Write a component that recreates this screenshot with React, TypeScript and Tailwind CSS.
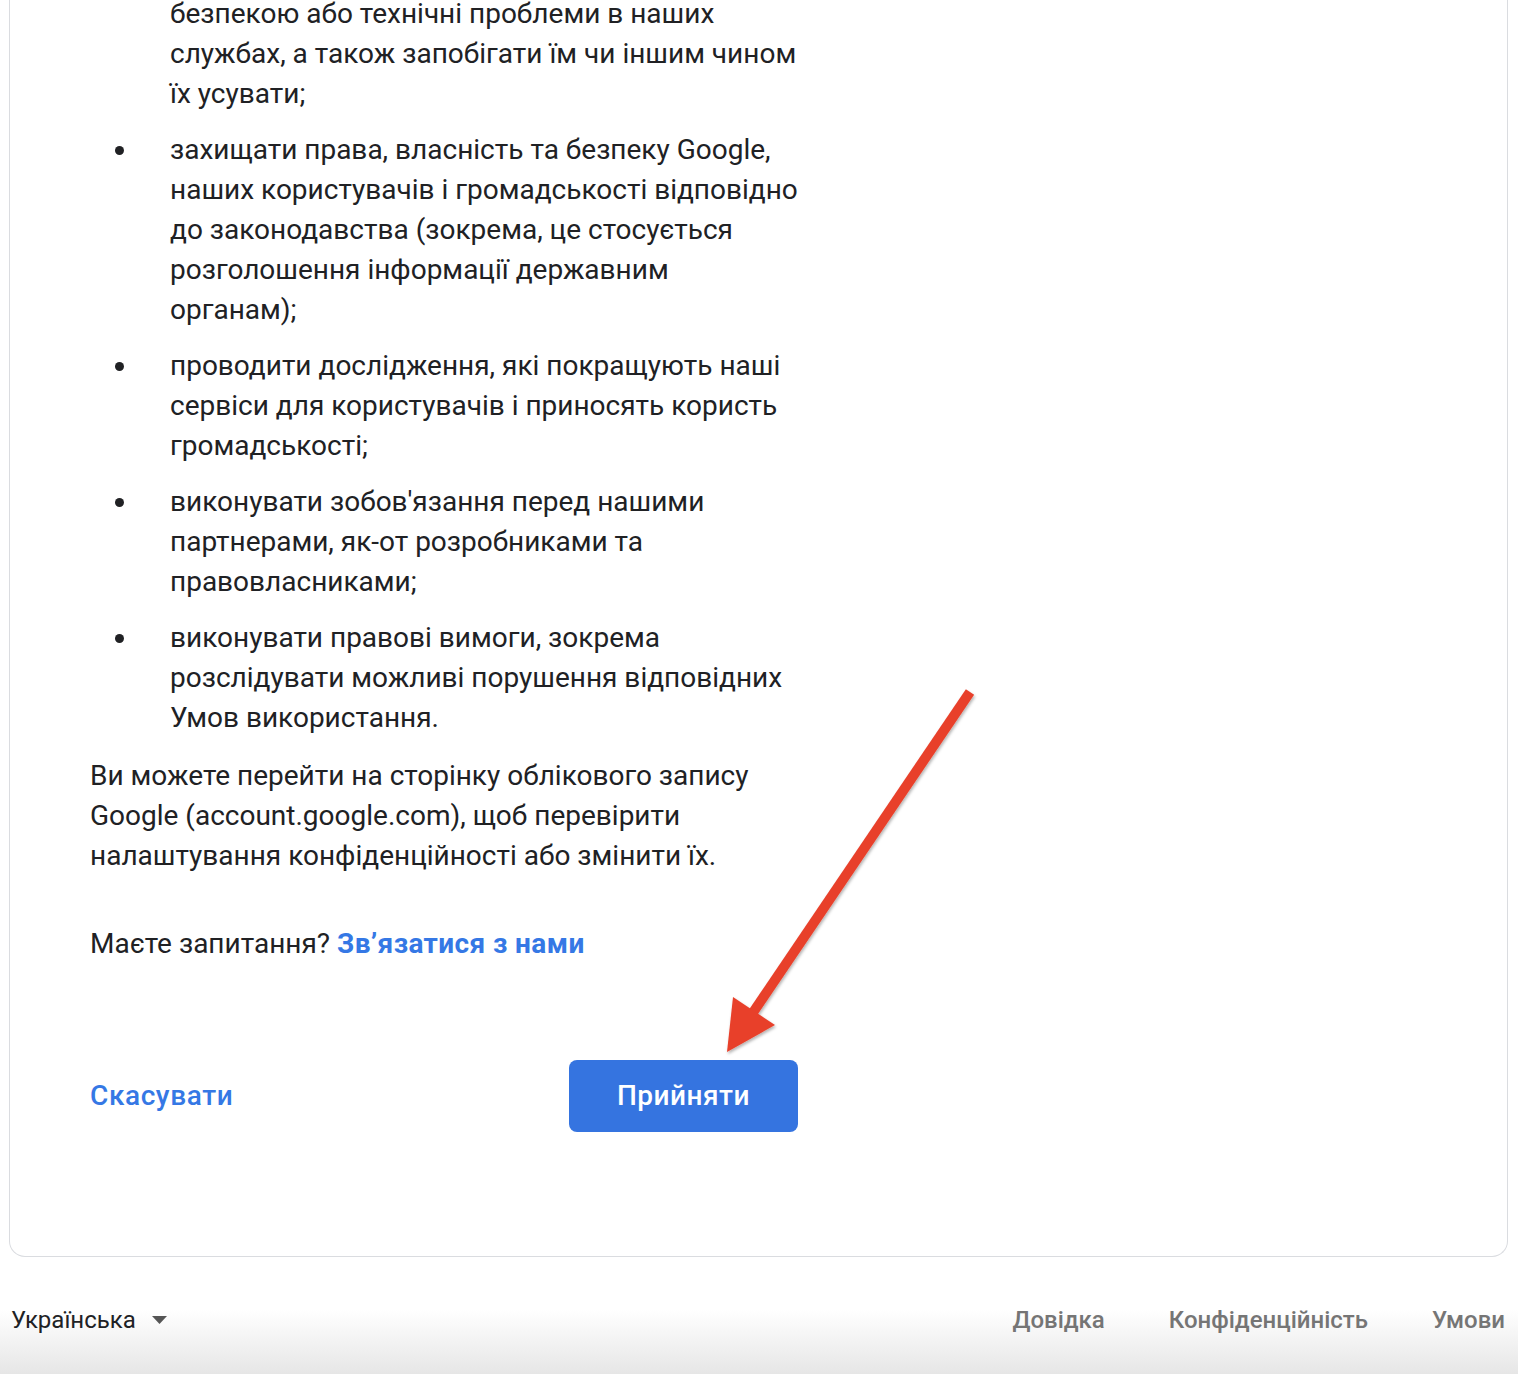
import React from "react";

const ITEMS: string[][] = [
  [
    "захищати права, власність та безпеку Google,",
    "наших користувачів і громадськості відповідно",
    "до законодавства (зокрема, це стосується",
    "розголошення інформації державним",
    "органам);",
  ],
  [
    "проводити дослідження, які покращують наші",
    "сервіси для користувачів і приносять користь",
    "громадськості;",
  ],
  [
    "виконувати зобов'язання перед нашими",
    "партнерами, як-от розробниками та",
    "правовласниками;",
  ],
  [
    "виконувати правові вимоги, зокрема",
    "розслідувати можливі порушення відповідних",
    "Умов використання.",
  ],
];

const Lines: React.FC<{ lines: string[] }> = ({ lines }) => (
  <div>
    {lines.map((l, i) => (
      <div key={i} className="whitespace-nowrap">
        {l}
      </div>
    ))}
  </div>
);

const App: React.FC = () => {
  return (
    <div
      className="relative w-[1518px] h-[1374px] overflow-hidden bg-white text-[#202124]"
      style={{ fontFamily: "Roboto, 'Noto Sans', sans-serif" }}
    >
      {/* Card (top scrolled out of view) */}
      <div className="flow-root ml-[9px] w-[1499px] h-[1257px] border border-t-0 border-[#dadce0] rounded-b-[16px] pl-[80px]">
        <div className="w-[708px] -mt-[6px] text-[28px] leading-[40px]">
          {/* tail of the previous bullet */}
          <div className="pl-[80px] mb-[16px]">
            <Lines
              lines={[
                "безпекою або технічні проблеми в наших",
                "службах, а також запобігати їм чи іншим чином",
                "їх усувати;",
              ]}
            />
          </div>

          <ul className="mb-[18px]">
            {ITEMS.map((item, i) => (
              <li key={i} className="flex mb-[16px] last:mb-0">
                <div className="w-[80px] shrink-0 pl-[25px] pt-[16px]">
                  <span className="block w-[9px] h-[9px] rounded-full bg-[#202124]" />
                </div>
                <Lines lines={item} />
              </li>
            ))}
          </ul>

          <Lines
            lines={[
              "Ви можете перейти на сторінку облікового запису",
              "Google (account.google.com), щоб перевірити",
              "налаштування конфіденційності або змінити їх.",
            ]}
          />

          <p className="mt-[48px] whitespace-nowrap">
            Маєте запитання?{" "}
            <a className="font-bold text-[#3578e5] tracking-[0.4px]">Зв’язатися з нами</a>
          </p>

          {/* Actions */}
          <div className="mt-[96px] flex items-center justify-between">
            <button className="text-[#3578e5] font-medium text-[28px] leading-[40px] tracking-[0.6px]">
              Скасувати
            </button>
            <button className="w-[229px] h-[72px] rounded-[8px] bg-[#3574e0] text-white font-medium text-[28px] tracking-[0.5px]">
              Прийняти
            </button>
          </div>
        </div>
      </div>

      {/* Footer */}
      <div className="h-[117px] bg-gradient-to-b from-white via-white via-[45%] to-[#e6e6e6] flex items-start justify-between pt-[46px] pl-[11px] pr-[13px] text-[24px] leading-[34px]">
        <div className="flex items-center gap-[16px]">
          <span className="text-[#202124]">Українська</span>
          <svg width="15" height="8" viewBox="0 0 15 8">
            <path d="M0 0 L15 0 L7.5 8 Z" fill="#555" />
          </svg>
        </div>
        <div className="flex items-center gap-[64px] font-medium text-[#757575]">
          <span>Довідка</span>
          <span>Конфіденційність</span>
          <span>Умови</span>
        </div>
      </div>

      {/* Annotation arrow */}
      <svg
        className="absolute left-0 top-0 pointer-events-none"
        width="1518"
        height="1374"
        viewBox="0 0 1518 1374"
      >
        <defs>
          <filter id="sh" x="-20%" y="-20%" width="140%" height="140%">
            <feDropShadow dx="1" dy="2" stdDeviation="1.5" floodColor="#000" floodOpacity="0.3" />
          </filter>
        </defs>
        <g filter="url(#sh)" fill="#e8412c" stroke="none">
          <line x1="970" y1="692" x2="752" y2="1014" stroke="#e8412c" strokeWidth="10" />
          <polygon points="733,997 775,1025 727,1052" />
        </g>
      </svg>
    </div>
  );
};

export default App;
